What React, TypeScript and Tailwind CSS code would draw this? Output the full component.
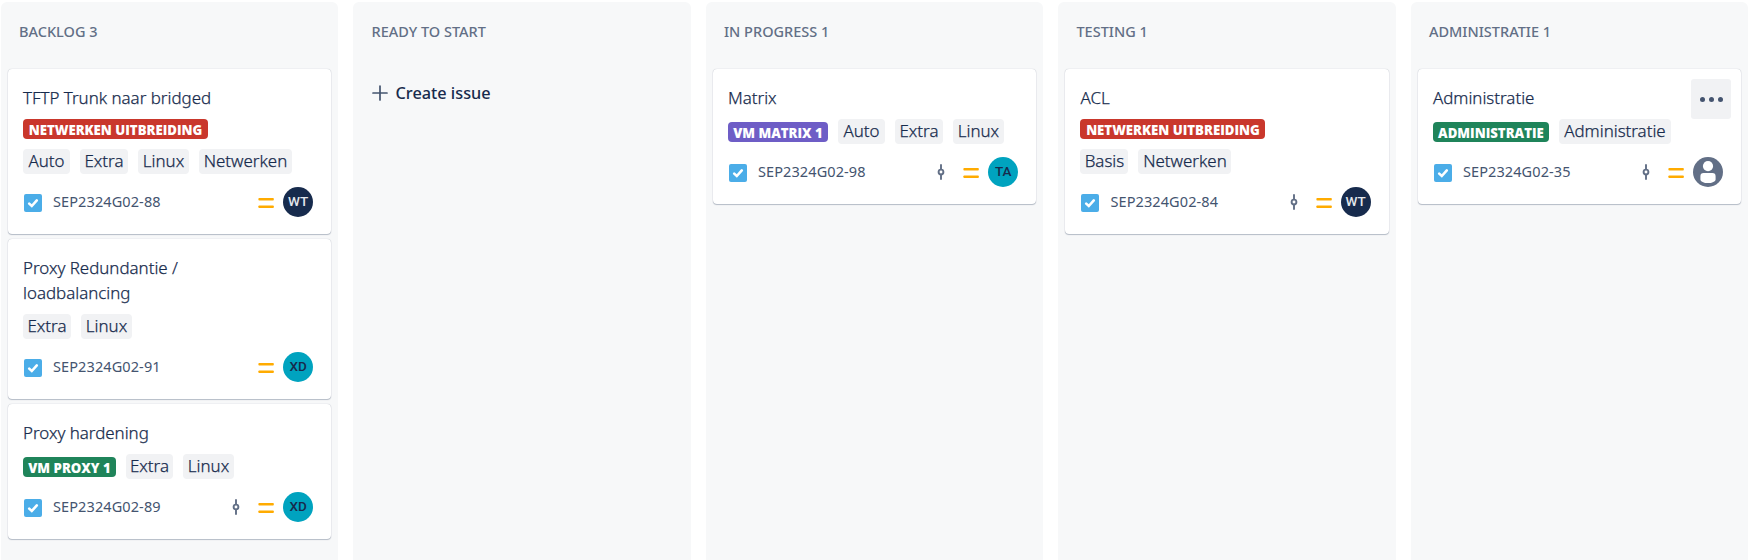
type Chip = { text: string; width: string; epic?: string };
type Issue = {
  title: string;
  rows: Chip[][];
  id: string;
  commit?: boolean;
  who: string;
  menu?: boolean;
};

const RED = "bg-[#c9372c]";
const GREEN = "bg-[#1f845a]";
const PURPLE = "bg-[#6e5dc6]";

const auto: Chip = { text: "Auto", width: "w-[47px]" };
const extra: Chip = { text: "Extra", width: "w-[48px]" };
const linux: Chip = { text: "Linux", width: "w-[51px]" };
const netwerken: Chip = { text: "Netwerken", width: "w-[93px]" };
const uitbreiding: Chip = { text: "NETWERKEN UITBREIDING", width: "w-[185px]", epic: RED };

const columns: { name: string; issues: Issue[]; create?: boolean }[] = [
  {
    name: "BACKLOG 3",
    issues: [
      { title: "TFTP Trunk naar bridged", rows: [[uitbreiding], [auto, extra, linux, netwerken]], id: "SEP2324G02-88", who: "WT" },
      { title: "Proxy Redundantie / loadbalancing", rows: [[extra, linux]], id: "SEP2324G02-91", who: "XD" },
      {
        title: "Proxy hardening",
        rows: [[{ text: "VM PROXY 1", width: "w-[93px]", epic: GREEN }, { ...extra, width: "w-[47px]" }, linux]],
        id: "SEP2324G02-89",
        commit: true,
        who: "XD",
      },
    ],
  },
  { name: "READY TO START", issues: [], create: true },
  {
    name: "IN PROGRESS 1",
    issues: [
      {
        title: "Matrix",
        rows: [[{ text: "VM MATRIX 1", width: "w-[100px]", epic: PURPLE }, auto, extra, linux]],
        id: "SEP2324G02-98",
        commit: true,
        who: "TA",
      },
    ],
  },
  {
    name: "TESTING 1",
    issues: [
      {
        title: "ACL",
        rows: [[uitbreiding], [{ text: "Basis", width: "w-[48px]" }, netwerken]],
        id: "SEP2324G02-84",
        commit: true,
        who: "WT",
      },
    ],
  },
  {
    name: "ADMINISTRATIE 1",
    issues: [
      {
        title: "Administratie",
        rows: [[{ text: "ADMINISTRATIE", width: "w-[116px]", epic: GREEN }, { text: "Administratie", width: "w-[112px]" }]],
        id: "SEP2324G02-35",
        commit: true,
        who: "",
        menu: true,
      },
    ],
  },
];

function TaskIcon() {
  return (
    <svg className="size-[18px]" viewBox="0 0 18 18">
      <rect width="18" height="18" rx="2" fill="#4bade8" />
      <path d="M5.2 9.6 7.8 12 12.8 6.4" fill="none" stroke="#fff" strokeWidth="2.6" strokeLinecap="round" />
    </svg>
  );
}

function CommitIcon() {
  return (
    <svg className="size-[20px]" viewBox="0 0 20 20" fill="none" stroke="#626f86" strokeWidth="1.9">
      <path d="M10 3V7M10 13V17" strokeLinecap="round" />
      <circle cx="10" cy="10" r="2.4" />
    </svg>
  );
}

function PriorityIcon() {
  return (
    <svg className="size-[20px]" viewBox="0 0 20 20" fill="#ffab00">
      <rect x="2.4" y="6" width="15.4" height="2.5" rx="0.8" />
      <rect x="2.4" y="13.5" width="15.4" height="2.5" rx="0.8" />
    </svg>
  );
}

function Avatar({ who }: { who: string }) {
  if (!who) {
    return (
      <svg className="size-[30px]" viewBox="0 0 30 30">
        <circle cx="15" cy="15" r="15" fill="#626f86" />
        <circle cx="15" cy="9.1" r="5.1" fill="#fff" />
        <path d="M7.4 19.2a3.2 3.2 0 0 1 3.2-3.2h8.8a3.2 3.2 0 0 1 3.2 3.2v3.2c0 2-3.6 3.7-7.6 3.7s-7.6-1.7-7.6-3.7z" fill="#fff" />
      </svg>
    );
  }
  const dark = who === "WT";
  return (
    <span
      className={`flex size-[30px] items-center justify-center rounded-full font-['Roboto',sans-serif] text-[13.5px] leading-none font-medium ${
        dark ? "bg-[#172b4d] text-[#e4e7ec]" : "bg-[#00a3bf] text-[#172b4d]"
      }`}
    >
      {who}
    </span>
  );
}

function ChipView({ chip }: { chip: Chip }) {
  if (chip.epic) {
    return (
      <span
        className={`mt-[3px] flex h-5 items-center justify-center rounded-[4px] pt-[3px] font-['Open_Sans',sans-serif] text-[13.2px] leading-none font-extrabold whitespace-nowrap text-white ${chip.width} ${chip.epic}`}
      >
        {chip.text}
      </span>
    );
  }
  return (
    <span
      className={`flex h-[25px] items-center justify-center rounded-[4px] bg-[#f1f2f4] text-[16.9px] leading-none font-light whitespace-nowrap text-[#172b4d] [-webkit-text-stroke:0.25px] ${chip.width}`}
    >
      {chip.text}
    </span>
  );
}

function Card({ issue }: { issue: Issue }) {
  return (
    <article className="relative rounded-[4px] bg-white px-[15px] pt-[16px] pb-[17px] shadow-[0_1px_1px_#091e4240,0_0_1px_#091e424f]">
      <h3 className="w-[190px] text-[16.9px] leading-[25px] font-light text-[#172b4d] [-webkit-text-stroke:0.25px]">{issue.title}</h3>
      <div className="mt-[9px] flex flex-col gap-[10px]">
        {issue.rows.map((row, i) => (
          <div key={i} className={`flex gap-[10px] ${row.length === 1 ? "-mt-[3px]" : ""}`}>
            {row.map((chip) => (
              <ChipView key={chip.text} chip={chip} />
            ))}
          </div>
        ))}
      </div>
      <div className="mt-[13px] flex h-[30px] items-center pr-[3px] pl-[1px]">
        <span className="mt-[2px]">
          <TaskIcon />
        </span>
        <span className="ml-[11px] pb-[2px] text-[14.5px] leading-5 tracking-[0.1px] text-[#44546f]">{issue.id}</span>
        <span className="ml-auto flex items-center">
          {issue.commit && (
            <span className="mr-[10px]">
              <CommitIcon />
            </span>
          )}
          <span className="mr-[7px]">
            <PriorityIcon />
          </span>
          <Avatar who={issue.who} />
        </span>
      </div>
      {issue.menu && (
        <button className="absolute top-[10px] right-[10px] flex size-10 items-center justify-center gap-[4px] rounded-[3px] bg-[#f1f2f4]">
          <i className="size-[5px] rounded-full bg-[#44546f]" />
          <i className="size-[5px] rounded-full bg-[#44546f]" />
          <i className="size-[5px] rounded-full bg-[#44546f]" />
        </button>
      )}
    </article>
  );
}

export default function App() {
  return (
    <main className="flex h-[560px] gap-[15.3px] overflow-hidden bg-white pt-[2px] pl-[1px] font-['Noto_Sans','Open_Sans',sans-serif]">
      {columns.map((col) => (
        <section key={col.name} className="w-[337.2px] shrink-0 rounded-t-[6px] bg-[#f7f8f9] px-[7px]">
          <h2 className="flex h-[67px] pt-[19px] pl-[11px] text-[14.5px] leading-5 font-medium text-[#626f86]">{col.name}</h2>
          {col.create && (
            <button className="flex items-center pt-[12px] pl-[12px] text-[16.3px] leading-6 font-medium text-[#172b4d]">
              <svg className="mr-[7px] size-[16px]" viewBox="0 0 16 16" stroke="#44546f" strokeWidth="1.7" strokeLinecap="round">
                <path d="M8 1v14M1 8h14" />
              </svg>
              Create issue
            </button>
          )}
          <div className="flex flex-col gap-[5px]">
            {col.issues.map((issue) => (
              <Card key={issue.id} issue={issue} />
            ))}
          </div>
        </section>
      ))}
    </main>
  );
}
